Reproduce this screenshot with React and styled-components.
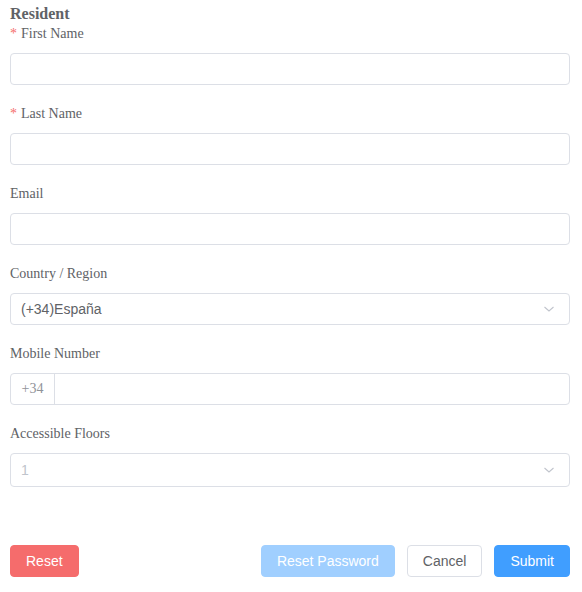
import React from 'react'
import styled, { createGlobalStyle } from 'styled-components'

const Global = createGlobalStyle`
  html, body { margin: 0; padding: 0; background: #fff; }
  * { box-sizing: border-box; }
`

const Root = styled.div`
  width: 582px;
  padding: 5px 12px 0 10px;
  font-family: "Liberation Serif", "Times New Roman", serif;
  color: #606266;
`

const Title = styled.div`
  font-size: 16px;
  line-height: 18px;
  font-weight: bold;
  color: #606266;
  height: 18px;
`

const Item = styled.div`
  margin-bottom: ${p => p.$last ? '58px' : '18px'};
`

const Label = styled.div`
  font-size: 14px;
  line-height: 20px;
  padding: 1px 0 9px;
  color: #606266;
`

const Star = styled.span`
  color: #f56c6c;
  margin-right: 4px;
`

const Box = styled.div`
  height: ${p => p.$h || 32}px;
  border: 1px solid #dcdfe6;
  border-radius: 4px;
  background: #fff;
  display: flex;
  align-items: center;
  font-family: "Liberation Sans", Arial, sans-serif;
  font-size: 14px;
  color: ${p => p.$muted ? '#c0c4cc' : '#606266'};
  padding: 0 ${p => p.$pad ? '14px 0 10px' : '0'};
`

const Value = styled.span`
  flex: 1;
`

const Prepend = styled.div`
  width: 44px;
  height: 100%;
  border-right: 1px solid #dcdfe6;
  display: flex;
  align-items: center;
  justify-content: center;
  color: #909399;
  font-family: "Liberation Serif", "Times New Roman", serif;
  font-size: 14px;
`

const Chevron = () => (
  <svg width="12" height="12" viewBox="0 0 12 12" fill="none">
    <path d="M1.5 4 L6 8 L10.5 4" stroke="#c0c4cc" strokeWidth="1.1" />
  </svg>
)

const Actions = styled.div`
  display: flex;
  align-items: center;
  gap: 12px;
`

const Spacer = styled.div`
  flex: 1;
`

const Button = styled.button`
  height: 32px;
  padding: 0 ${p => p.$px || 15}px;
  border-radius: 4px;
  font-family: "Liberation Sans", Arial, sans-serif;
  font-size: 14px;
  border: 1px solid ${p => p.$border || p.$bg};
  background: ${p => p.$bg};
  color: ${p => p.$color || '#fff'};
  cursor: pointer;
`

export default function App() {
  return (
    <Root>
      <Global />
      <Title>Resident</Title>
      <Item>
        <Label><Star>*</Star>First Name</Label>
        <Box />
      </Item>
      <Item>
        <Label><Star>*</Star>Last Name</Label>
        <Box />
      </Item>
      <Item>
        <Label>Email</Label>
        <Box />
      </Item>
      <Item>
        <Label>Country / Region</Label>
        <Box $pad>
          <Value>(+34)España</Value>
          <Chevron />
        </Box>
      </Item>
      <Item>
        <Label>Mobile Number</Label>
        <Box>
          <Prepend>+34</Prepend>
        </Box>
      </Item>
      <Item $last>
        <Label>Accessible Floors</Label>
        <Box $pad $muted $h={34}>
          <Value>1</Value>
          <Chevron />
        </Box>
      </Item>
      <Actions>
        <Button $bg="#f56c6c">Reset</Button>
        <Spacer />
        <Button $bg="#a0cfff">Reset Password</Button>
        <Button $bg="#fff" $border="#dcdfe6" $color="#606266">Cancel</Button>
        <Button $bg="#409eff">Submit</Button>
      </Actions>
    </Root>
  )
}
